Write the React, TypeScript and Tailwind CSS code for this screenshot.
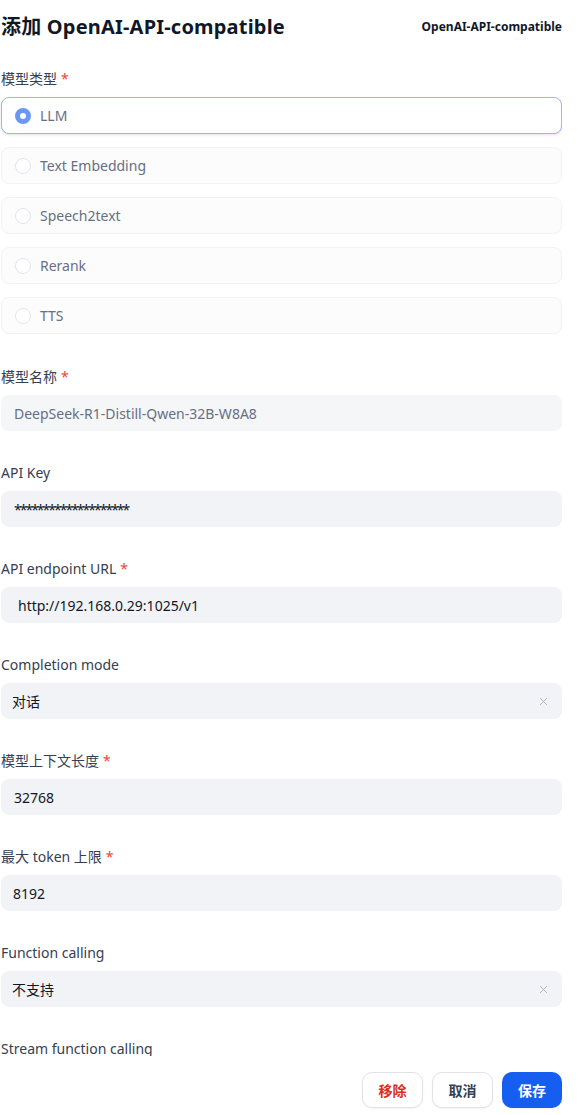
import { X } from "lucide-react";

const font = { fontFamily: '"Noto Sans", "Noto Sans CJK SC", sans-serif' };

const types = ["LLM", "Text Embedding", "Speech2text", "Rerank", "TTS"];

const Label = ({ text, required }: { text: string; required?: boolean }) => (
  <div className="h-5 leading-5 text-[14px] text-[#354052] pt-[1px] box-content mb-[8px]">
    {text}
    {required && <span className="ml-1 text-[#f04438]">*</span>}
  </div>
);

const Field = ({
  label,
  required,
  value,
  muted,
  clear,
  pl = "pl-[13px]",
  vc = "",
}: {
  label: string;
  required?: boolean;
  value: string;
  muted?: boolean;
  clear?: boolean;
  pl?: string;
  vc?: string;
}) => (
  <div className="flex flex-col">
    <Label text={label} required={required} />
    <div
      className={`flex items-center h-9 rounded-lg ${pl} pr-3 text-[14px] ${
        muted ? "bg-[#f5f6f8] text-[#676f83]" : "bg-[#f1f3f6] text-[#101828]"
      }`}
    >
      <span className={`flex-1 ${vc}`}>{value}</span>
      {clear && <X className="w-[13px] h-[13px] text-[#a3a9b6]" strokeWidth={1.5} />}
    </div>
  </div>
);

export default function App() {
  return (
    <div className="w-[586px] h-[1115px] bg-white flex flex-col overflow-hidden" style={font}>
      <div className="h-[1056px] overflow-hidden pl-[1px] w-[562px]">
        <div className="flex items-center justify-between pt-[13px] h-[41px]">
          <h1 className="text-[20px] leading-7 font-bold text-[#101828] tracking-[0.2px]">添加 OpenAI-API-compatible</h1>
          <span className="text-[12px] font-bold text-[#101828]">OpenAI-API-compatible</span>
        </div>

        <div className="flex flex-col gap-[31px] mt-[27px]">
          <div className="flex flex-col mb-[1px]">
            <Label text="模型类型" required />
            <div className="flex flex-col gap-[13px]">
              {types.map((t, i) => (
                <div
                  key={i}
                  className={`flex items-center h-[37px] rounded-lg px-[13px] gap-[9px] text-[14px] text-[#676f83] ${
                    i == 0
                      ? "border border-[#9ab6f6] bg-white shadow-sm"
                      : "border border-[#f2f3f5] bg-[#fcfcfd]"
                  }`}
                >
                  {i == 0 ? (
                    <span className="w-4 h-4 rounded-full border-[5px] border-[#6b98f5] bg-white" />
                  ) : (
                    <span className="w-4 h-4 rounded-full border border-[#e3e5ea] bg-white" />
                  )}
                  <span>{t}</span>
                </div>
              ))}
            </div>
          </div>

          <Field label="模型名称" required value="DeepSeek-R1-Distill-Qwen-32B-W8A8" muted />
          <Field label="API Key" value="********************" vc="tracking-[-2px]" />
          <Field label="API endpoint URL" required value="http://192.168.0.29:1025/v1" pl="pl-[17px]" />
          <Field label="Completion mode" value="对话" clear pl="pl-[11px]" />
          <Field label="模型上下文长度" required value="32768" />
          <Field label="最大 token 上限" required value="8192" pl="pl-[12px]" />
          <Field label="Function calling" value="不支持" clear pl="pl-[11px]" />
          <div className="flex flex-col">
            <Label text="Stream function calling" />
            <div className="h-9 rounded-lg bg-[#f1f3f6]" />
          </div>
        </div>
      </div>

      <div className="flex justify-end gap-[9px] pt-4 w-[562px]">
        <button className="w-[61px] h-9 rounded-[10px] border border-[#e1e3e8] bg-white text-[14px] font-semibold text-[#d92d20] shadow-xs">
          移除
        </button>
        <button className="w-[61px] h-9 rounded-[10px] border border-[#e1e3e8] bg-white text-[14px] font-semibold text-[#354052] shadow-xs">
          取消
        </button>
        <button className="w-[60px] h-9 rounded-[10px] bg-[#155eef] text-[14px] font-semibold text-white shadow-xs">
          保存
        </button>
      </div>
    </div>
  );
}
